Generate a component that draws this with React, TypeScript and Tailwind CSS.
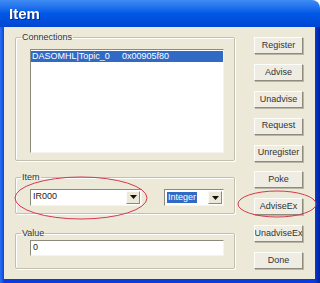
import React from 'react';

const buttons = [
  'Register',
  'Advise',
  'Unadvise',
  'Request',
  'Unregister',
  'Poke',
  'AdviseEx',
  'UnadviseEx',
  'Done',
];

const Combo = ({ children, width }: { children: React.ReactNode; width: string }) => (
  <div
    className={`${width} h-[17px] flex items-stretch bg-white border border-t-[#8d8a7c] border-l-[#8d8a7c] border-r-[#f4f3ee] border-b-[#f4f3ee]`}
  >
    <div className="flex-1 flex items-center pl-[2px] overflow-hidden">{children}</div>
    <div className="w-[14px] m-[1px] flex items-center justify-center bg-[#ece9d8] border border-t-[#fbfaf6] border-l-[#fbfaf6] border-r-[#8d8a7c] border-b-[#8d8a7c]">
      <svg width="7" height="4" viewBox="0 0 7 4">
        <polygon points="0,0 7,0 3.5,4" fill="#111" />
      </svg>
    </div>
  </div>
);

const Group = ({ label, className, children }: { label: string; className: string; children: React.ReactNode }) => (
  <fieldset className={`w-[220px] p-0 border border-[#c2bfae] rounded-[2px] shadow-[1px_1px_0_#fff,inset_1px_1px_0_#fff] ${className}`}>
    <legend className="ml-[5px] px-[1px] leading-[12px] text-[9px] text-[#333]">{label}</legend>
    {children}
  </fieldset>
);

const App = () => {
  return (
    <div
      className="relative w-[320px] h-[283px] bg-white flex flex-col"
      style={{ fontFamily: '"Liberation Sans", Arial, sans-serif' }}
    >
      <div className="h-[27px] shrink-0 rounded-tr-[8px] bg-gradient-to-b from-[#3f8cf3] via-[#0058e6] to-[#0046d2] flex items-center pl-[9px]">
        <span className="text-white font-bold text-[15px] leading-none drop-shadow-[1px_1px_0_#0a2a8a]">Item</span>
      </div>
      <div className="flex-1 flex bg-[#0b3bd8]">
        <div className="w-[4px] bg-gradient-to-r from-[#2c6ef2] to-[#0b44dd]" />
        <div className="w-[311px] h-[252px] bg-[#ece9d8] flex pl-[11px] pt-[4px]">
          <div className="flex flex-col">
            <Group label="Connections" className="">
              <div className="pl-[14px] pt-[6px] pb-[7px]">
                <div className="w-[194px] h-[104px] bg-white border border-t-[#8d8a7c] border-l-[#8d8a7c] border-r-[#f4f3ee] border-b-[#f4f3ee] pt-[1px]">
                  <div className="h-[11px] bg-[#316ac5] text-white text-[9px] leading-[11px] flex">
                    <span className="pl-[1px] w-[91px]">DASOMHL|Topic_0</span>
                    <span>0x00905f80</span>
                  </div>
                </div>
              </div>
            </Group>
            <Group label="Item" className="mt-[10px]">
              <div className="pl-[14px] pt-[5px] pb-[7px] flex items-center">
                <Combo width="w-[112px]">
                  <span className="text-[9px] text-[#222]">IR000</span>
                </Combo>
                <div className="ml-[22px] mt-[1px]">
                  <Combo width="w-[60px]">
                    <span className="text-[9px] leading-[11px] px-[1px] bg-[#316ac5] text-white">Integer</span>
                  </Combo>
                </div>
              </div>
            </Group>
            <Group label="Value" className="mt-[13px]">
              <div className="pl-[14px] pt-[1px] pb-[12px]">
                <div className="w-[194px] h-[16px] bg-white border border-t-[#8d8a7c] border-l-[#8d8a7c] border-r-[#f4f3ee] border-b-[#f4f3ee] flex items-center pl-[2px] text-[9px] text-[#222]">
                  0
                </div>
              </div>
            </Group>
          </div>
          <div className="ml-[19px] mt-[6px] h-[232px] flex flex-col justify-between">
            {buttons.map((b) => (
              <div
                key={b}
                className="w-[49px] h-[17px] flex items-center justify-center overflow-hidden whitespace-nowrap bg-[#efede3] border border-t-[#fdfdfa] border-l-[#fdfdfa] border-r-[#8e8b7d] border-b-[#8e8b7d] shadow-[1px_1px_0_#b9b6a6] text-[9px] text-[#333]"
              >
                {b}
              </div>
            ))}
          </div>
        </div>
        <div className="w-[5px] bg-gradient-to-r from-[#0a3bd4] to-[#001f9c]" />
      </div>
      <svg className="absolute left-0 top-0 pointer-events-none" width="320" height="283">
        <ellipse cx="81" cy="198" rx="66" ry="21" fill="none" stroke="#d23a4e" strokeWidth="1" />
        <ellipse cx="277" cy="204" rx="39" ry="13" fill="none" stroke="#d23a4e" strokeWidth="1" />
      </svg>
    </div>
  );
};

export default App;
